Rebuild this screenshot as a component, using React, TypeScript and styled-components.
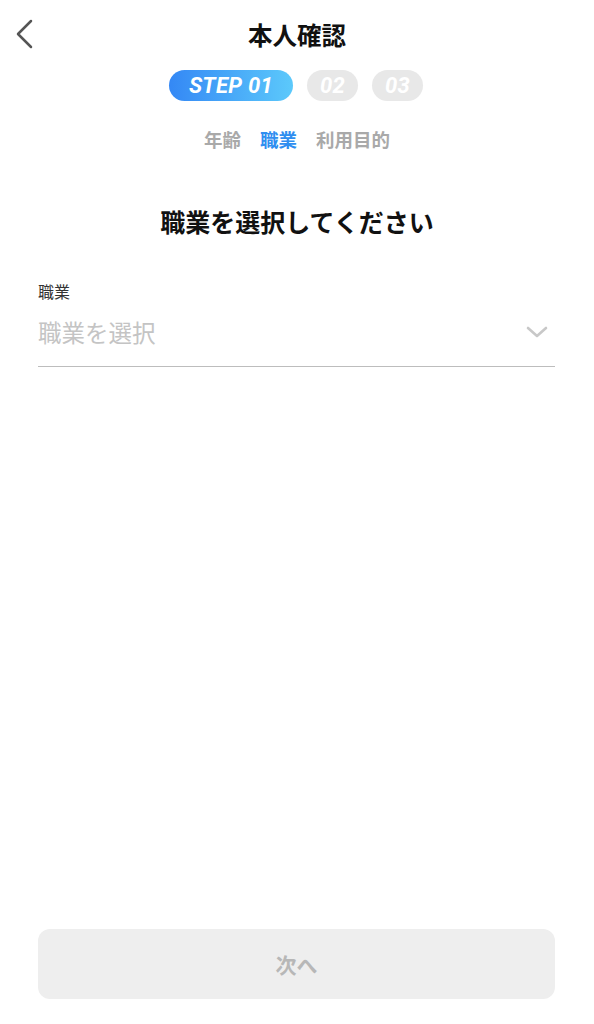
import React from 'react';
import styled, { createGlobalStyle } from 'styled-components';

const GlobalStyle = createGlobalStyle`
  html, body {
    margin: 0;
    padding: 0;
    background: #ffffff;
  }
  body {
    font-family: "Noto Sans CJK JP", "Noto Sans", sans-serif;
    color: #111111;
  }
`;

const Page = styled.div`
  width: 594px;
  min-height: 1024px;
  display: flex;
  flex-direction: column;
  box-sizing: border-box;
`;

const Header = styled.header`
  height: 70px;
  display: grid;
  grid-template-columns: 1fr auto 1fr;
  align-items: center;
`;

const BackButton = styled.button`
  justify-self: start;
  margin-left: 12px;
  margin-top: -3px;
  width: 24px;
  height: 32px;
  padding: 0;
  border: 0;
  background: none;
  display: flex;
  align-items: center;
  justify-content: center;
  cursor: pointer;
`;

const Title = styled.h1`
  margin: 0;
  font-size: 24.5px;
  line-height: 32px;
  font-weight: 700;
  color: #111111;
`;

const Steps = styled.div`
  display: flex;
  justify-content: center;
  gap: 14px;
  padding-right: 2px;
`;

const StepPill = styled.div<{ $active?: boolean }>`
  height: 31px;
  width: ${p => (p.$active ? '124px' : '51px')};
  box-sizing: border-box;
  border-radius: 16px;
  display: flex;
  align-items: center;
  justify-content: center;
  background: ${p => (p.$active ? 'linear-gradient(90deg, #3488f5 0%, #5cc9fb 100%)' : '#e8e8e8')};
  color: #ffffff;
  font-family: Roboto, "Liberation Sans", sans-serif;
  font-style: italic;
  font-weight: 700;
  font-size: 22px;
  letter-spacing: 0.3px;
`;

const Tabs = styled.div`
  margin-top: 26px;
  display: flex;
  justify-content: center;
  gap: 19px;
`;

const Tab = styled.span<{ $active?: boolean }>`
  font-size: 18.5px;
  line-height: 24px;
  font-weight: 600;
  color: ${p => (p.$active ? '#2f8ef0' : '#a9a9a9')};
`;

const Heading = styled.h2`
  margin: 52px 0 0;
  text-align: center;
  font-size: 25px;
  line-height: 36px;
  font-weight: 700;
  color: #111111;
`;

const Field = styled.div`
  margin: 41px 39px 0 38px;
  display: flex;
  flex-direction: column;
`;

const FieldLabel = styled.label`
  font-size: 16px;
  line-height: 22px;
  color: #333333;
`;

const SelectRow = styled.div`
  margin-top: 14px;
  padding-bottom: 18px;
  border-bottom: 1.5px solid #bdbdbd;
  display: flex;
  align-items: center;
  justify-content: space-between;
  cursor: pointer;
`;

const Placeholder = styled.span`
  font-size: 23.5px;
  line-height: 32px;
  color: #c4c4c4;
`;

const Spacer = styled.div`
  flex: 1;
`;

const NextButton = styled.button`
  margin: 0 39px 25px 38px;
  height: 70px;
  border: 0;
  border-radius: 12px;
  background: #eeeeee;
  color: #b7b7b7;
  font-family: "Noto Sans CJK JP", "Noto Sans", sans-serif;
  font-size: 21px;
  font-weight: 700;
`;

const App: React.FC = () => {
  return (
    <>
      <GlobalStyle />
      <Page>
        <Header>
          <BackButton aria-label="戻る">
            <svg width="18" height="30" viewBox="0 0 18 30" fill="none">
              <path d="M16 2 L3 15 L16 28" stroke="#555555" strokeWidth="2.5" strokeLinecap="round" strokeLinejoin="round" />
            </svg>
          </BackButton>
          <Title>本人確認</Title>
          <div />
        </Header>
        <Steps>
          <StepPill $active>STEP 01</StepPill>
          <StepPill>02</StepPill>
          <StepPill>03</StepPill>
        </Steps>
        <Tabs>
          <Tab>年齢</Tab>
          <Tab $active>職業</Tab>
          <Tab>利用目的</Tab>
        </Tabs>
        <Heading>職業を選択してください</Heading>
        <Field>
          <FieldLabel>職業</FieldLabel>
          <SelectRow>
            <Placeholder>職業を選択</Placeholder>
            <svg width="22" height="12" viewBox="0 0 22 12" fill="none" style={{ marginRight: 7 }}>
              <path d="M2 2 L11 10 L20 2" stroke="#c8c8c8" strokeWidth="2.6" strokeLinecap="round" strokeLinejoin="round" />
            </svg>
          </SelectRow>
        </Field>
        <Spacer />
        <NextButton disabled>次へ</NextButton>
      </Page>
    </>
  );
};

export default App;
